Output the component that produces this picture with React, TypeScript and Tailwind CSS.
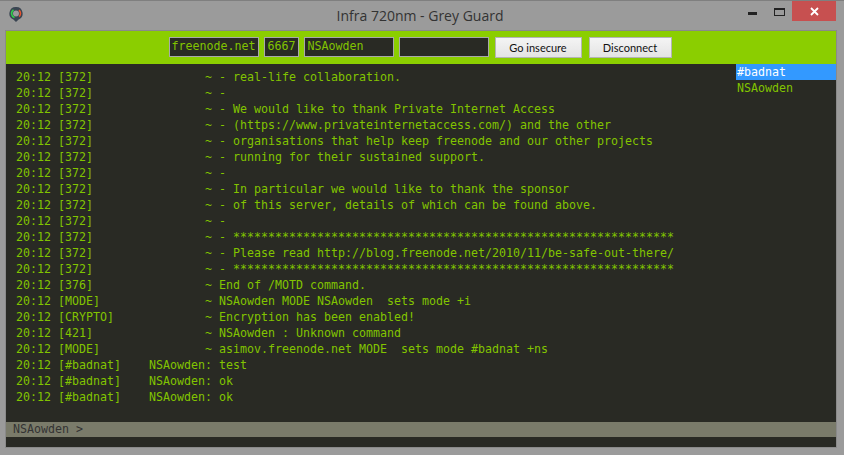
const lines = [
  "20:12 [372]                ~ - real-life collaboration.",
  "20:12 [372]                ~ -",
  "20:12 [372]                ~ - We would like to thank Private Internet Access",
  "20:12 [372]                ~ - (https://www.privateinternetaccess.com/) and the other",
  "20:12 [372]                ~ - organisations that help keep freenode and our other projects",
  "20:12 [372]                ~ - running for their sustained support.",
  "20:12 [372]                ~ -",
  "20:12 [372]                ~ - In particular we would like to thank the sponsor",
  "20:12 [372]                ~ - of this server, details of which can be found above.",
  "20:12 [372]                ~ -",
  "20:12 [372]                ~ - ***************************************************************",
  "20:12 [372]                ~ - Please read http://blog.freenode.net/2010/11/be-safe-out-there/",
  "20:12 [372]                ~ - ***************************************************************",
  "20:12 [376]                ~ End of /MOTD command.",
  "20:12 [MODE]               ~ NSAowden MODE NSAowden  sets mode +i",
  "20:12 [CRYPTO]             ~ Encryption has been enabled!",
  "20:12 [421]                ~ NSAowden : Unknown command",
  "20:12 [MODE]               ~ asimov.freenode.net MODE  sets mode #badnat +ns",
  "20:12 [#badnat]    NSAowden: test",
  "20:12 [#badnat]    NSAowden: ok",
  "20:12 [#badnat]    NSAowden: ok",
];

const mono = "font-['DejaVu_Sans_Mono',monospace] text-[11.63px]";
const field = `h-5 border border-[#a9a9a9] bg-[#292a24] px-[2px] leading-[17px] text-[#82c400] ${mono}`;
const btn = "h-[21px] border border-[#b4b4b4] bg-gradient-to-b from-[#f4f4f4] to-[#e4e4e4] text-[11px] leading-[19px] text-[#111] text-center font-['Lato',sans-serif]";

export default function App() {
  return (
    <div className="flex h-[455px] w-[844px] flex-col overflow-hidden border-t border-[#7f7f7f] bg-[#9b9b9b]">
      <div className="flex h-[29px] shrink-0 items-start">
        <div className="w-[96px] pl-[9px] pt-[6px]">
          <svg width="14" height="15" viewBox="0 0 14 15" className="block">
            <path d="M7 0a6.5 6.5 0 0 0-2.6 12.5L7 15l2.6-2.5A6.5 6.5 0 0 0 7 0z" fill="#3a4552" />
            <circle cx="7" cy="6.5" r="3" fill="#9b9b9b" />
            <path d="M4.5 2.8A4.4 4.4 0 0 0 5.5 10.6" fill="none" stroke="#2fd04a" strokeWidth="1.6" />
            <path d="M10 3.2A4.4 4.4 0 0 1 10.2 9.6" fill="none" stroke="#e8542e" strokeWidth="1.6" />
          </svg>
        </div>
        <div className="flex-1 pr-[4px] pt-[5px] text-center font-['Open_Sans',sans-serif] text-[14px] leading-[20px] text-[#333]">
          Infra 720nm - Grey Guard
        </div>
        <div className="flex items-start pr-[8px]">
          <div className="mt-[11px] h-[3px] w-[9px] bg-[#222]" />
          <div className="ml-[17px] mt-[7px] h-[8px] w-[11px] border border-t-2 border-[#222]" />
          <div className="ml-[7px] flex h-[20px] w-[44px] items-center justify-center bg-[#c75050]">
            <svg width="9" height="9" viewBox="0 0 9 9">
              <path d="M1 1l7 7M8 1L1 8" stroke="#fff" strokeWidth="1.8" />
            </svg>
          </div>
        </div>
      </div>
      <div className="ml-[5px] mr-[7px] flex h-[418px] flex-col border border-[#8a8a8a] bg-[#292a24]">
        <div className="flex h-[33px] shrink-0 items-start justify-center gap-[5px] bg-[#8bce00] pr-[2px] pt-[6px]">
          <div className={`${field} w-[90px]`}>freenode.net</div>
          <div className={`${field} w-[35px] pl-[3px]`}>6667</div>
          <div className={`${field} w-[90px] pl-[3px]`}>NSAowden</div>
          <div className={`${field} w-[90px]`} />
          <div className={`${btn} ml-[1px] w-[87px]`}>Go insecure</div>
          <div className={`${btn} ml-[2px] w-[83px]`}>Disconnect</div>
        </div>
        <div className="flex min-h-0 flex-1">
          <div className={`flex-1 whitespace-pre pl-[10px] pt-[5px] leading-[16px] text-[#82c400] ${mono}`}>
            {lines.map((l, i) => (
              <div key={i} className="h-4">{l}</div>
            ))}
          </div>
          <div className={`w-[100px] leading-[16px] ${mono}`}>
            <div className="h-4 bg-[#3399ff] pl-[1px] text-white">#badnat</div>
            <div className="h-4 pl-[1px] text-[#82c400]">NSAowden</div>
          </div>
        </div>
        <div className={`mb-[10px] h-[15px] shrink-0 whitespace-pre bg-[#7a7b6a] pl-[7px] leading-[14px] text-[#333] ${mono}`}>NSAowden &gt;</div>
      </div>
    </div>
  );
}
